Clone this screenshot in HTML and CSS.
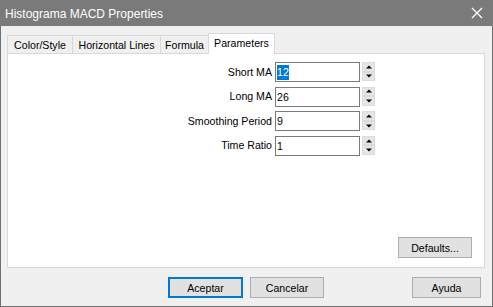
FILE: index.html
```html
<!DOCTYPE html>
<html>
<head>
<meta charset="utf-8">
<link rel="stylesheet" href="styles.css">
</head>
<body>
<div class="window">
  <div class="titlebar">
    <span class="title">Histograma MACD Properties</span>
    <svg class="close" width="12" height="12" viewBox="0 0 12 12"><path d="M1 1L11 11M11 1L1 11" stroke="#fff" stroke-width="1.3" fill="none"/></svg>
  </div>
  <div class="body">
    <div class="tabs">
      <div class="tab t1">Color/Style</div>
      <div class="tab t2">Horizontal Lines</div>
      <div class="tab t3">Formula</div>
      <div class="tab t4 active">Parameters</div>
    </div>
    <div class="panel">
      <div class="form">
        <label class="lbl">Short MA</label>
        <div class="input"><span class="sel">12</span></div>
        <div class="spin"><span class="up"></span><span class="down"></span></div>
        <label class="lbl">Long MA</label>
        <div class="input">26</div>
        <div class="spin"><span class="up"></span><span class="down"></span></div>
        <label class="lbl">Smoothing Period</label>
        <div class="input">9</div>
        <div class="spin"><span class="up"></span><span class="down"></span></div>
        <label class="lbl">Time Ratio</label>
        <div class="input">1</div>
        <div class="spin"><span class="up"></span><span class="down"></span></div>
      </div>
      <div class="panel-foot">
        <button class="btn defaults">Defaults...</button>
      </div>
    </div>
    <div class="footer">
      <button class="btn primary">Aceptar</button>
      <button class="btn cancel">Cancelar</button>
      <button class="btn help">Ayuda</button>
    </div>
  </div>
</div>
</body>
</html>
```
FILE: styles.css
```css
html, body {
  margin: 0;
  padding: 0;
  background: #f0f0f0;
}
.window {
  width: 493px;
  height: 307px;
  box-sizing: border-box;
  border: 1px solid #6f6f6f;
  border-top: none;
  background: #f0f0f0;
  display: flex;
  flex-direction: column;
  font-family: "Liberation Sans", Arial, sans-serif;
  font-size: 10.6px;
  color: #000;
}
.titlebar {
  height: 26px;
  background: #7a7a7a;
  display: flex;
  align-items: center;
  justify-content: space-between;
  padding: 0 10px 0 5px;
  margin: 0 -1px;
  flex: none;
}
.title {
  color: #fff;
  font-size: 12px;
  padding-top: 1px;
}
.close {
  display: block;
}
.body {
  flex: 1;
  display: flex;
  flex-direction: column;
  padding: 7px 7px 0 6px;
}
.tabs {
  display: flex;
  align-items: flex-end;
  height: 20px;
  position: relative;
  z-index: 1;
}
.tab {
  height: 18px;
  box-sizing: border-box;
  border: 1px solid #d9d9d9;
  border-bottom: none;
  border-right: none;
  background: #f0f0f0;
  display: flex;
  align-items: center;
  justify-content: center;
  padding-top: 1px;
}
.t1 { width: 65px; }
.t2 { width: 88px; }
.t3 { width: 48px; }
.t4 { width: 67px; }
.tab.active {
  height: 21px;
  background: #fff;
  border-right: 1px solid #d9d9d9;
  margin-bottom: -1px;
  padding-top: 0;
  padding-bottom: 2px;
}
.panel {
  height: 215px;
  box-sizing: border-box;
  background: #fff;
  border: 1px solid #d9d9d9;
  display: flex;
  flex-direction: column;
  flex: none;
}
.form {
  display: grid;
  grid-template-columns: 265px 86px 14px;
  column-gap: 1px;
  row-gap: 4.67px;
  margin-top: 8px;
  grid-auto-rows: 20px;
}
.lbl {
  text-align: right;
  align-self: center;
  margin-right: 1px;
  padding-bottom: 1px;
}
.input {
  box-sizing: border-box;
  border: 1px solid #7a7a7a;
  background: #fff;
  padding-left: 1px;
  display: flex;
  align-items: center;
  margin-left: 1px;
}
.sel {
  background: #0078d7;
  color: #fff;
  padding: 1px 0;
  line-height: 13px;
}
.spin {
  display: flex;
  flex-direction: column;
  height: 19px;
  margin-left: 1px;
}
.spin span {
  flex: 1;
  background: #e5e5e5;
  border: 1px solid #dcdcdc;
  position: relative;
}
.spin .up { border-bottom-width: 0.5px; }
.spin .down { border-top-width: 0.5px; }
.spin span::after {
  content: "";
  position: absolute;
  left: 50%;
  top: 50%;
  transform: translate(-50%, -50%);
  width: 0;
  height: 0;
  border-left: 3px solid transparent;
  border-right: 3px solid transparent;
}
.spin .up::after { border-bottom: 3px solid #000; }
.spin .down::after { border-top: 3px solid #000; }
.panel-foot {
  margin-top: auto;
  display: flex;
  justify-content: flex-end;
  padding: 0 12px 9px 0;
}
.btn {
  font-family: "Liberation Sans", Arial, sans-serif;
  font-size: 10.6px;
  color: #000;
  background: #e1e1e1;
  border: 1px solid #adadad;
  height: 21px;
  padding: 0;
  margin: 0;
  box-sizing: border-box;
}
.defaults { width: 74px; }
.footer {
  display: flex;
  align-items: center;
  padding-top: 9px;
}
.primary {
  width: 75px;
  margin-left: 161px;
  border: 2px solid #0078d7;
}
.cancel {
  width: 74px;
  margin-left: 7px;
}
.help {
  width: 69px;
  margin-left: auto;
  margin-right: 4px;
}
```
